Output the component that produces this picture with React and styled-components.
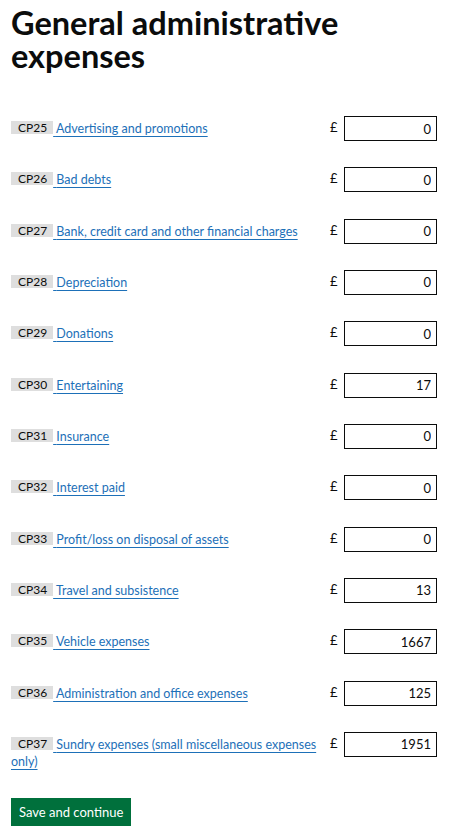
import styled, { createGlobalStyle } from "styled-components";

const GlobalStyle = createGlobalStyle`
  body {
    margin: 0;
    background: #fff;
    font-family: Lato, "Liberation Sans", Arial, sans-serif;
    color: #0b0c0c;
  }
`;

const rows = [
  ["CP25", "Advertising and promotions", "0"],
  ["CP26", "Bad debts", "0"],
  ["CP27", "Bank, credit card and other financial charges", "0"],
  ["CP28", "Depreciation", "0"],
  ["CP29", "Donations", "0"],
  ["CP30", "Entertaining", "17"],
  ["CP31", "Insurance", "0"],
  ["CP32", "Interest paid", "0"],
  ["CP33", "Profit/loss on disposal of assets", "0"],
  ["CP34", "Travel and subsistence", "13"],
  ["CP35", "Vehicle expenses", "1667"],
  ["CP36", "Administration and office expenses", "125"],
  ["CP37", "Sundry expenses (small miscellaneous expenses only)", "1951"],
];

function App() {
  return (
    <Page>
      <GlobalStyle />
      <Heading>General administrative expenses</Heading>
      <Form>
        {rows.map(([code, label, value]) => (
          <Row key={code}>
            <Label>
              <Tag>{code}</Tag>
              <Link href="#"> {label}</Link>
            </Label>
            <Pound>£</Pound>
            <Input defaultValue={value} />
          </Row>
        ))}
      </Form>
      <Button>Save and continue</Button>
    </Page>
  );
}

export default App;

const Page = styled.div`
  padding: 6px 11px 0 11px;
  width: 454px;
  box-sizing: border-box;
`;

const Heading = styled.h1`
  margin: 0;
  font-size: 32.5px;
  line-height: 33px;
  font-weight: 700;
  width: 360px;
`;

const Form = styled.div`
  margin-top: 44px;
  display: flex;
  flex-direction: column;
  gap: 26.33px;
`;

const Row = styled.div`
  display: grid;
  grid-template-columns: 315px 10px 93px;
  column-gap: 4px;
  align-items: start;
`;

const Label = styled.div`
  font-size: 12.5px;
  line-height: 17px;
  padding-top: 4px;
`;

const Tag = styled.span`
  display: inline-block;
  background: #dedede;
  color: #0b0c0c;
  font-size: 12px;
  line-height: 13px;
  padding: 0 6px 0 7px;
  vertical-align: 1px;
`;

const Link = styled.a`
  color: #1d70b8;
  text-decoration: underline;
  text-underline-offset: 3px;
  text-decoration-thickness: 1px;
`;

const Pound = styled.span`
  font-size: 13px;
  line-height: 17px;
  padding-top: 3px;
`;

const Input = styled.input`
  box-sizing: border-box;
  width: 93px;
  height: 25px;
  border: 1px solid #0b0c0c;
  text-align: right;
  padding: 0 5px;
  font-family: Lato, "Liberation Sans", Arial, sans-serif;
  font-size: 13px;
  color: #0b0c0c;
  border-radius: 0;
  outline: none;
`;

const Button = styled.button`
  display: block;
  margin-top: 28px;
  background: #00703c;
  color: #fff;
  border: none;
  box-shadow: 0 2px 0 #002d18;
  font-family: Lato, "Liberation Sans", Arial, sans-serif;
  font-size: 13px;
  height: 28px;
  padding: 0 8px;
  white-space: nowrap;
  border-radius: 0;
`;
